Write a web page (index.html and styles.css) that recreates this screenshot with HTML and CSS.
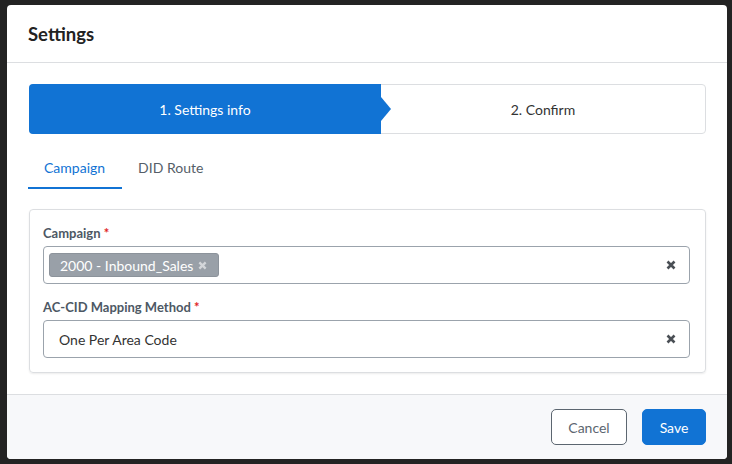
FILE: index.html
```html
<!DOCTYPE html>
<html>
<head>
<meta charset="utf-8">
<link rel="stylesheet" href="styles.css">
</head>
<body>
<div class="modal">
  <div class="modal-header"><h1 class="title">Settings</h1></div>
  <div class="modal-body">
    <div class="stepper">
      <div class="step step-active">1. Settings info</div>
      <div class="step">2. Confirm</div>
    </div>
    <div class="tabs">
      <div class="tab tab-active">Campaign</div>
      <div class="tab">DID Route</div>
    </div>
    <div class="card">
      <div class="field">
        <div class="label">Campaign <span class="req">*</span></div>
        <div class="select">
          <div class="select-value">
            <span class="tag">2000 - Inbound_Sales <svg class="tag-x" viewBox="0 0 10 10" width="9" height="9"><path d="M1.5 1.5L8.5 8.5M8.5 1.5L1.5 8.5" stroke="currentColor" stroke-width="2.6"/></svg></span>
          </div>
          <svg class="clear" viewBox="0 0 10 10" width="10" height="10"><path d="M1.5 1.5L8.5 8.5M8.5 1.5L1.5 8.5" stroke="currentColor" stroke-width="2.6"/></svg>
        </div>
      </div>
      <div class="field">
        <div class="label">AC-CID Mapping Method <span class="req">*</span></div>
        <div class="select">
          <div class="select-value text-value">One Per Area Code</div>
          <svg class="clear" viewBox="0 0 10 10" width="10" height="10"><path d="M1.5 1.5L8.5 8.5M8.5 1.5L1.5 8.5" stroke="currentColor" stroke-width="2.6"/></svg>
        </div>
      </div>
    </div>
  </div>
  <div class="modal-footer">
    <button class="btn btn-outline">Cancel</button>
    <button class="btn btn-primary">Save</button>
  </div>
</div>
</body>
</html>
```

FILE: styles.css
```css
* { box-sizing: border-box; }
html, body { margin: 0; padding: 0; }
body {
  background: #232323;
  font-family: Lato, "Open Sans", "Liberation Sans", sans-serif;
  width: 732px;
  height: 464px;
  overflow: hidden;
}
.modal {
  margin: 5px 0 0 7px;
  width: 720px;
  height: 454px;
  background: #fff;
  border-radius: 4px;
  display: flex;
  flex-direction: column;
  overflow: hidden;
}
.modal-header {
  height: 58px;
  border-bottom: 1px solid #dcdee1;
  padding: 0 21px;
  display: flex;
  align-items: center;
}
.title {
  margin: 0;
  font-size: 18.5px;
  font-weight: 700;
  color: #222;
}
.modal-body {
  padding: 21px 21px 21px 22px;
  flex: 1;
}
.stepper {
  display: flex;
  height: 50px;
  border: 1px solid #dcdee1;
  border-radius: 4px;
}
.step {
  flex: 1;
  display: flex;
  align-items: center;
  justify-content: center;
  font-size: 14px;
  color: #333;
  position: relative;
}
.step-active {
  flex: 0 0 352px;
  background: #1173d4;
  color: #fff;
  margin: -1px 0 -1px -1px;
  border-radius: 4px 0 0 4px;
}
.step-active::after {
  content: "";
  position: absolute;
  right: -10px;
  top: 50%;
  margin-top: -12px;
  border-left: 10px solid #1173d4;
  border-top: 12px solid transparent;
  border-bottom: 12px solid transparent;
}
.tabs {
  display: flex;
  margin-top: 14px;
  margin-left: -1px;
}
.tab {
  padding: 10px 16px 9px 16px;
  font-size: 14px;
  line-height: 20px;
  color: #555e68;
  border-bottom: 2px solid transparent;
}
.tab-active {
  color: #1173d4;
  border-bottom-color: #1173d4;
  padding-right: 17px;
}
.card {
  margin-top: 20px;
  border: 1px solid #dcdee1;
  border-radius: 4px;
  box-shadow: 0 1px 2px rgba(0,0,0,0.08);
  padding: 14px 15px 14px 13px;
}
.field + .field { margin-top: 14px; }
.label {
  font-size: 13px;
  font-weight: 700;
  color: #4d5864;
  line-height: 18px;
  margin-bottom: 4px;
}
.req { color: #e02424; }
.select {
  height: 38px;
  border: 1px solid #9ba3ac;
  border-radius: 4px;
  display: flex;
  align-items: center;
  padding: 0 13px 0 5px;
}
.select-value { flex: 1; display: flex; align-items: center; }
.text-value {
  padding-left: 10px;
  font-size: 14px;
  color: #333;
}
.tag {
  display: inline-flex;
  align-items: center;
  height: 24px;
  background: #99a0a8;
  border: 1px solid #8c939b;
  border-radius: 3px;
  color: #fff;
  font-size: 14px;
  padding: 0 11px 0 10px;
}
.tag-x { margin-left: 5px; color: #d3d6da; }
.clear { color: #4a4f55; }
.modal-footer {
  height: 65px;
  border-top: 1px solid #dcdee1;
  background: #f7f8fa;
  display: flex;
  justify-content: flex-end;
  align-items: flex-start;
  padding: 14px 21px 0 0;
  gap: 15px;
}
.btn {
  height: 36px;
  border-radius: 5px;
  font-family: inherit;
  font-size: 14px;
  cursor: pointer;
}
.btn-outline {
  width: 76px;
  background: #fff;
  border: 1px solid #5c6670;
  color: #5c6670;
}
.btn-primary {
  width: 64px;
  background: #1173d4;
  border: 1px solid #1173d4;
  color: #fff;
}
```
